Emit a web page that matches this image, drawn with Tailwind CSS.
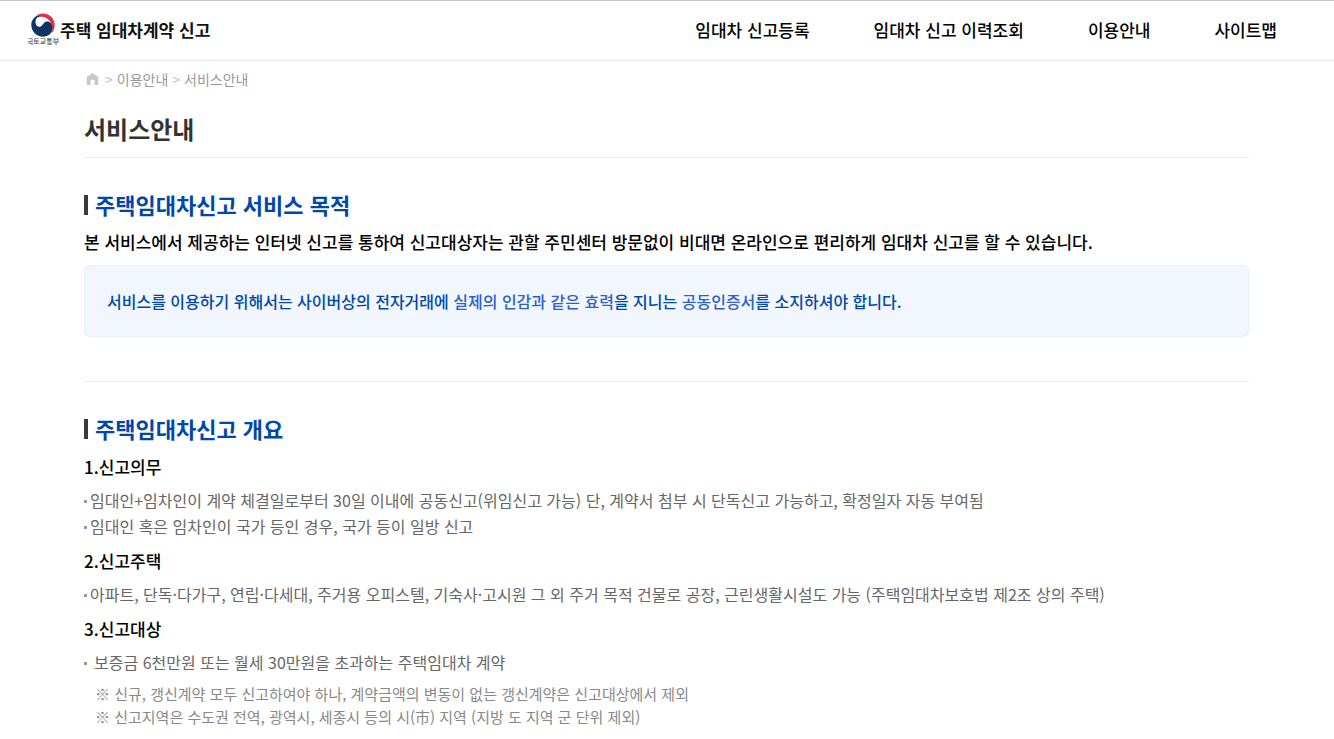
<!DOCTYPE html>
<html lang="ko">
<head>
  <meta charset="UTF-8" />
  <meta name="viewport" content="width=device-width, initial-scale=1.0" />
  <title>주택 임대차계약 신고 - 서비스안내</title>
  <script src="https://cdn.jsdelivr.net/npm/@tailwindcss/browser@4"></script>
</head>
<body class="bg-white text-black font-['Noto_Sans_CJK_KR',sans-serif]">
  <!-- 헤더 -->
  <header class="flex items-center justify-between h-[61px] pb-[2px] pl-[26px] pr-[57px] border-t border-t-[#c8c8c8] border-b border-b-[#e8e8e8]">
    <a href="#" class="flex items-center">
      <span class="flex flex-col items-center w-[34px]">
        <svg class="w-6 h-6" viewBox="0 0 24 24">
          <path fill="#e5304b" d="M7.500 1.300C15 -1.500 23.700 3.500 23.700 12C23.700 15.500 22.500 18.500 20.500 20.500C23 13 19 5.500 12.500 4C10.500 3.500 8.500 3.500 6.500 4.200C5.800 3.500 6 2 7.500 1.300Z" />
          <path fill="#0b3664" d="M6.500 2.500C2.500 4.500 0.300 8 0.300 12C0.300 18.500 5.500 23.700 12 23.700C17.500 23.700 21.500 20 21.500 15C21.500 11 19 8.500 16 8.500C12 8.500 12 13.800 8.500 13.800C6 13.800 4.500 12 4.500 9C4.500 6.500 5.500 4 8.500 3.500Z" />
        </svg>
        <span class="text-[7px] leading-[9px] font-medium text-[#444] whitespace-nowrap">국토교통부</span>
      </span>
      <span class="text-[17px] font-bold text-[#111]">주택 임대차계약 신고</span>
    </a>
    <nav class="flex gap-16 text-[17px] leading-6 font-medium">
      <a href="#">임대차 신고등록</a>
      <a href="#">임대차 신고 이력조회</a>
      <a href="#">이용안내</a>
      <a href="#">사이트맵</a>
    </nav>
  </header>

  <main class="pl-[84px] pr-[85px]">
    <!-- 현재 위치 -->
    <nav class="flex items-center gap-1 pt-2 text-sm leading-5 text-[#999]">
      <a href="#" aria-label="홈" class="mr-[2px] ml-[2px]">
        <svg class="w-[13px] h-3" viewBox="0 0 13 12" fill="#c8c8c8"><path d="M6.500 0L0.800 4V12H4.500V8Q4.500 6.500 6.500 6.500T8.500 8V12H12.200V4Z" /></svg>
      </a>
      <span class="text-[#bbb]">&gt;</span>
      <a href="#">이용안내</a>
      <span class="text-[#bbb]">&gt;</span>
      <a href="#">서비스안내</a>
    </nav>

    <h1 class="pt-[22px] pb-[10px] border-b border-[#ededed] text-2xl leading-9 font-bold text-[#333]">서비스안내</h1>

    <!-- 서비스 목적 -->
    <section class="pt-[30px] pb-11 border-b border-[#ededed]">
      <h2 class="flex items-center gap-[7px] text-[22px] leading-8 font-bold text-[#0047ab]"><span class="mt-[2px] w-1 h-5 bg-[#3a3a3a]"></span>주택임대차신고 서비스 목적</h2>
      <p class="pt-[10px] text-[17px] leading-6 font-medium">본 서비스에서 제공하는 인터넷 신고를 통하여 신고대상자는 관할 주민센터 방문없이 비대면 온라인으로 편리하게 임대차 신고를 할 수 있습니다.</p>
      <p class="mt-[11px] px-[22px] py-[23px] rounded-md border border-[#e6effc] bg-[#f1f6ff] text-base leading-6 font-medium text-[#0047ab]">서비스를 이용하기 위해서는 사이버상의 전자거래에 <span class="text-[#2c5fca]">실제의 인감과 같은 효력</span>을 지니는 <span class="text-[#2c5fca]">공동인증서</span>를 소지하셔야 합니다.</p>
    </section>

    <!-- 신고 개요 -->
    <section class="pt-[30px] pb-5">
      <h2 class="flex items-center gap-[7px] text-[22px] leading-8 font-bold text-[#0047ab]"><span class="mt-[2px] w-1 h-5 bg-[#3a3a3a]"></span>주택임대차신고 개요</h2>

      <h3 class="pt-[11px] text-[17px] leading-6 font-medium">1.신고의무</h3>
      <ul class="pt-2 text-base leading-[26px] text-[#666]">
        <li class="flex items-center gap-[3px]"><span class="mt-[3px] w-[3px] h-[3px] bg-[#999]"></span>임대인+임차인이 계약 체결일로부터 30일 이내에 공동신고(위임신고 가능) 단, 계약서 첨부 시 단독신고 가능하고, 확정일자 자동 부여됨</li>
        <li class="flex items-center gap-[3px]"><span class="mt-[3px] w-[3px] h-[3px] bg-[#999]"></span>임대인 혹은 임차인이 국가 등인 경우, 국가 등이 일방 신고</li>
      </ul>

      <h3 class="pt-[10px] text-[17px] leading-6 font-medium">2.신고주택</h3>
      <ul class="pt-2 text-base leading-[26px] text-[#666]">
        <li class="flex items-center gap-[3px]"><span class="mt-[3px] w-[3px] h-[3px] bg-[#999]"></span>아파트, 단독·다가구, 연립·다세대, 주거용 오피스텔, 기숙사·고시원 그 외 주거 목적 건물로 공장, 근린생활시설도 가능 (주택임대차보호법 제2조 상의 주택)</li>
      </ul>

      <h3 class="pt-[10px] text-[17px] leading-6 font-medium">3.신고대상</h3>
      <ul class="pt-2 text-base leading-[26px] text-[#666]">
        <li class="flex items-center gap-[7px]"><span class="mt-[3px] w-[3px] h-[3px] bg-[#999]"></span>보증금 6천만원 또는 월세 30만원을 초과하는 주택임대차 계약</li>
      </ul>
      <div class="pt-[7px] pl-[11px] text-[15px] leading-[23px] text-[#888]">
        <p>※ 신규, 갱신계약 모두 신고하여야 하나, 계약금액의 변동이 없는 갱신계약은 신고대상에서 제외</p>
        <p>※ 신고지역은 수도권 전역, 광역시, 세종시 등의 시(市) 지역 (지방 도 지역 군 단위 제외)</p>
      </div>
    </section>
  </main>
</body>
</html>
